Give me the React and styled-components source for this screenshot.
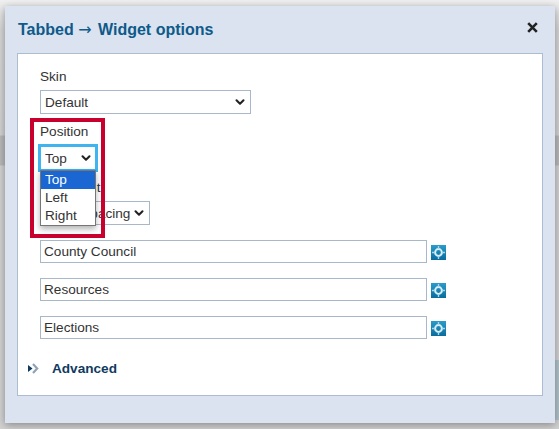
import styled, { createGlobalStyle } from "styled-components";
import { ChevronDown } from "lucide-react";

const GlobalStyle = createGlobalStyle`
  html, body {
    margin: 0;
    padding: 0;
    height: 100%;
    background-color: #e6e6e6;
    font-family: "Liberation Sans", Arial, sans-serif;
    overflow: hidden;
  }
`;

const Page = styled.div`
  width: 559px;
  height: 429px;
  box-sizing: border-box;
  padding: 6px 4px 6px 5px;
  background:
    linear-gradient(#b2c1c9, #b2c1c9) right 0 top 360px / 4px 60px no-repeat,
    linear-gradient(
      #f0f0f0 0,
      #d6d6d6 30px,
      #d2d2d2 135px,
      #b9b9b9 136px,
      #b9b9b9 165px,
      #d2d2d2 166px,
      #d2d2d2 429px
    );
`;

const Dialog = styled.div`
  height: 100%;
  box-sizing: border-box;
  padding: 0 12px 27px 12px;
  display: flex;
  flex-direction: column;
  background-color: #dae3ef;
  box-shadow: 0 2px 8px rgba(0, 0, 0, 0.35);
`;

const TitleBar = styled.div`
  height: 47px;
  flex: 0 0 auto;
  display: flex;
  align-items: center;
  justify-content: space-between;
  padding: 0 5px 0 1px;
`;

const Title = styled.h2`
  margin: 0;
  font-size: 16px;
  font-weight: 700;
  color: #0e5a8a;
`;

const TitleArrow = styled.span`
  font-family: "DejaVu Sans", sans-serif;
  font-weight: 400;
  font-size: 16px;
  letter-spacing: 2px;
`;

const Close = styled.svg`
  width: 11px;
  height: 11px;
  margin-bottom: 5px;
`;

const Panel = styled.div`
  position: relative;
  flex: 1 1 auto;
  box-sizing: border-box;
  padding: 14px 22px 0;
  background-color: #fff;
  border: 1px solid #adbdd1;
`;

const Field = styled.div`
  margin-bottom: ${(p) => p.$gap || 0}px;
`;

const Label = styled.div`
  font-size: 13.6px;
  line-height: 17px;
  color: #333;
  margin-bottom: 5px;
`;

const FakeSelect = styled.div`
  box-sizing: border-box;
  width: ${(p) => p.$width}px;
  height: 24px;
  display: flex;
  align-items: center;
  justify-content: space-between;
  padding: 0 3px 0 4px;
  font-size: 13.6px;
  white-space: nowrap;
  color: #333;
  background-color: #fff;
  border: 1px solid #a9b8c9;
`;

const FocusedSelect = styled(FakeSelect)`
  height: 28px;
  margin: -1px 0 0 -2px;
  padding: 0 2px 0 4px;
  border: 3px solid #3fb4ee;
`;

const Row = styled.div`
  display: flex;
  align-items: center;
  gap: 4px;
  margin-bottom: 15px;
`;

const TextInput = styled.div`
  box-sizing: border-box;
  width: 387px;
  height: 23px;
  line-height: 21px;
  padding: 0 3px;
  font-size: 13.6px;
  color: #333;
  border: 1px solid #a9b8c9;
`;

const PickSvg = styled.svg`
  width: 15px;
  height: 15px;
  margin-top: 2px;
`;

const Advanced = styled.div`
  display: flex;
  align-items: center;
  gap: 13px;
  line-height: 17px;
  margin: 21px 0 0 -12px;
  font-size: 13.6px;
  font-weight: 700;
  color: #0f3a5f;
`;

const Highlight = styled.div`
  position: absolute;
  left: 12px;
  top: 64px;
  width: 75px;
  height: 120px;
  box-sizing: border-box;
  border: 4px solid #c8002d;
`;

const Options = styled.div`
  position: absolute;
  left: 22px;
  top: 116px;
  box-sizing: border-box;
  width: 56px;
  background-color: #fff;
  border: 1px solid #767676;
  box-shadow: 0 3px 6px rgba(0, 0, 0, 0.3);
`;

const Option = styled.div`
  height: 18px;
  line-height: 18px;
  padding: 0 4px;
  font-size: 13.6px;
  color: ${(p) => (p.$active ? "#fff" : "#333")};
  background-color: ${(p) => (p.$active ? "#1a66d2" : "transparent")};
`;

function Arrow() {
  return <ChevronDown size={14} strokeWidth={3.5} color="#222" />;
}

function PickIcon({ id }) {
  return (
    <PickSvg viewBox="0 0 15 15">
      <defs>
        <linearGradient id={id} x1="0" y1="0" x2="0" y2="1">
          <stop offset="0" stopColor="#2a9ccb" />
          <stop offset="1" stopColor="#0a6c9c" />
        </linearGradient>
      </defs>
      <rect width="15" height="15" fill={`url(#${id})`} />
      <circle cx="7.5" cy="7.5" r="3.4" fill="none" stroke="#d8eff8" strokeWidth="2" />
      <path d="M7.5 1v3M7.5 11v3M1 7.5h3M11 7.5h3" stroke="#a8d8ec" strokeWidth="1.4" />
    </PickSvg>
  );
}

const tabs = ["County Council", "Resources", "Elections"];

export default function App() {
  return (
    <Page>
      <GlobalStyle />
      <Dialog>
        <TitleBar>
          <Title>
            Tabbed <TitleArrow>→</TitleArrow> Widget options
          </Title>
          <Close viewBox="0 0 11 11">
            <path d="M1.2 1.2l8.6 8.6M9.8 1.2l-8.6 8.6" stroke="#222" strokeWidth="2.6" />
          </Close>
        </TitleBar>
        <Panel>
          <Field $gap={9}>
            <Label>Skin</Label>
            <FakeSelect $width={211}>
              Default
              <Arrow />
            </FakeSelect>
          </Field>
          <Field $gap={7}>
            <Label>Position</Label>
            <FocusedSelect $width={60}>
              Top
              <Arrow />
            </FocusedSelect>
          </Field>
          <Field $gap={15}>
            <Label>Alignment</Label>
            <FakeSelect $width={110}>
              Equal spacing
              <Arrow />
            </FakeSelect>
          </Field>
          {tabs.map((tab, i) => (
            <Row key={tab}>
              <TextInput>{tab}</TextInput>
              <PickIcon id={`pick-${i}`} />
            </Row>
          ))}
          <Advanced>
            <svg width="11" height="11" viewBox="0 0 11 11">
              <path d="M0 2L4.5 5.5L0 9Z" fill="#0f3a5f" />
              <path d="M5 1l4.2 4.5L5 10" fill="none" stroke="#8fa3b8" strokeWidth="2.2" />
            </svg>
            Advanced
          </Advanced>
          <Options>
            <Option $active>Top</Option>
            <Option>Left</Option>
            <Option>Right</Option>
          </Options>
          <Highlight />
        </Panel>
      </Dialog>
    </Page>
  );
}
